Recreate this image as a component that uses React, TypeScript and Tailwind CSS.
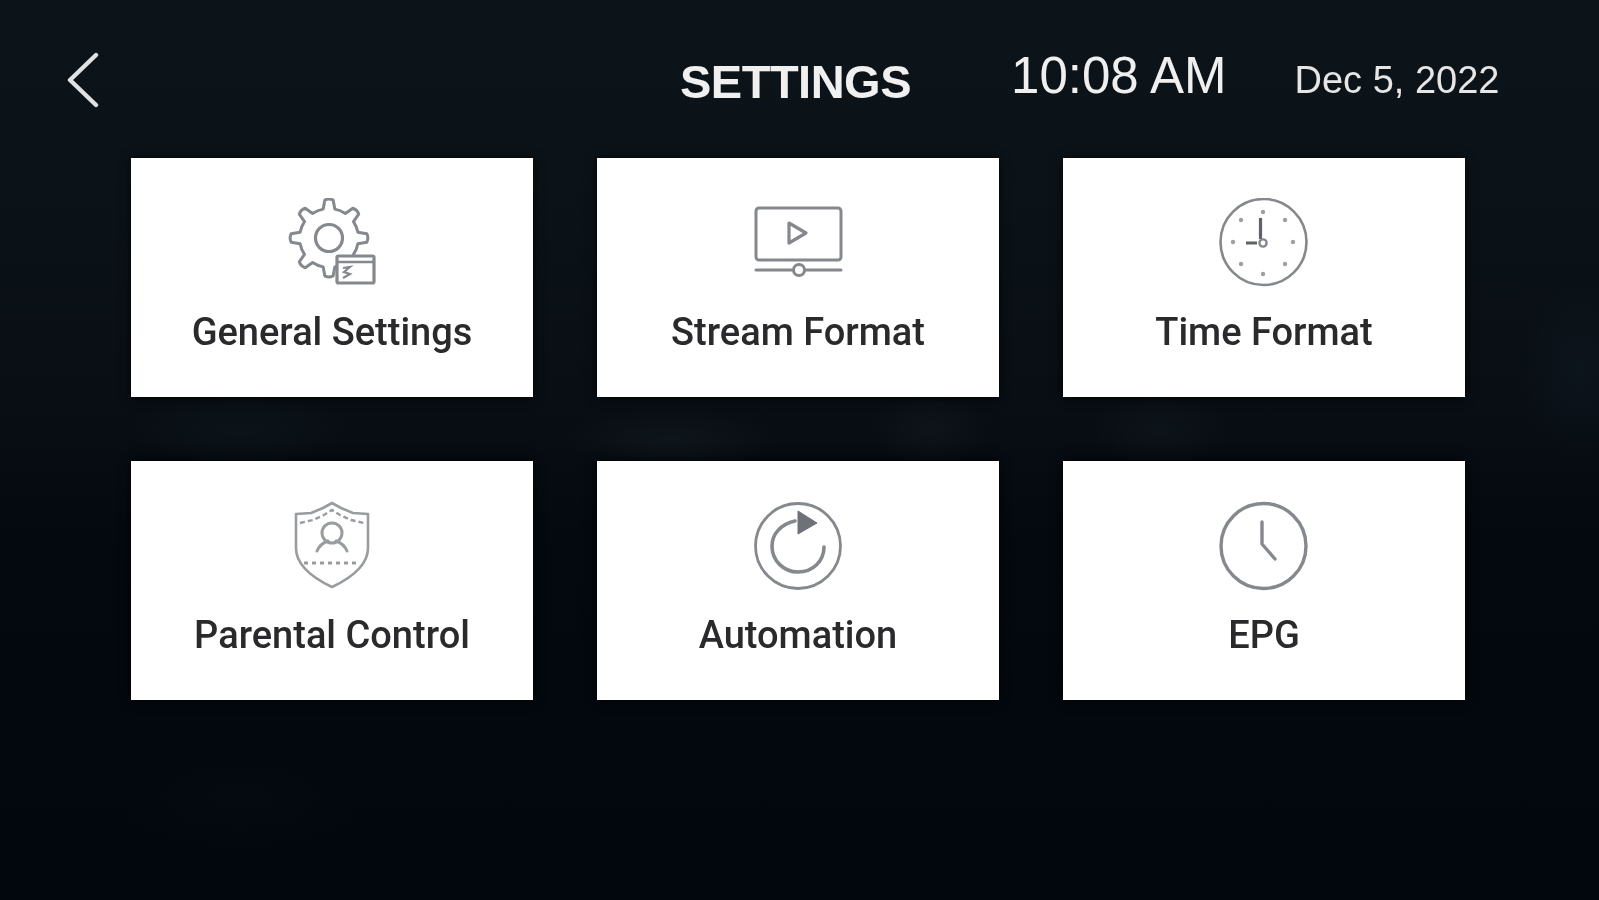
import React from "react";

const stroke = "#85888c";

function GearIcon() {
  const cx = 41, cy = 40;
  const pts: string[] = [];
  const n = 8, ro = 38, ri = 29.5;
  for (let i = 0; i < n; i++) {
    const a = (i / n) * Math.PI * 2 - Math.PI / 2;
    const d = Math.PI / n;
    const p = (r: number, t: number) => `${(cx + r * Math.cos(t)).toFixed(1)} ${(cy + r * Math.sin(t)).toFixed(1)}`;
    pts.push(`${i === 0 ? "M" : "L"}${p(ri, a - d * 0.5)}`, `L${p(ro, a - d * 0.28)}`, `Q${p(ro + 2, a)} ${p(ro, a + d * 0.28)}`, `L${p(ri, a + d * 0.5)}`, `A${ri} ${ri} 0 0 1 ${p(ri, a + d * 1.5)}`);
  }
  return (
    <svg width="92" height="92" viewBox="-2 0 92 92" fill="none" stroke={stroke} strokeWidth="3">
      <path d={pts.join(" ") + "Z"} strokeLinejoin="round" />
      <circle cx="41" cy="40" r="13.5" strokeWidth="3.2" />
      <rect x="49" y="58" width="37" height="27" rx="1.5" fill="#fff" strokeWidth="3.2" />
      <path d="M49 64H86" strokeWidth="2.6" />
      <path d="M55 70l7-1-6 5 6 2-7 4" strokeWidth="2.2" />
    </svg>
  );
}

function StreamIcon() {
  return (
    <svg width="92" height="92" viewBox="-2 0 92 92" fill="none" stroke={stroke} strokeWidth="3">
      <rect x="2" y="10" width="85" height="52" rx="3" />
      <path d="M35 25L52 35 35 45Z" strokeLinejoin="round" strokeWidth="3.2" />
      <path d="M2 72H39M51 72H87" strokeLinecap="round" />
      <circle cx="45" cy="72" r="5.5" />
    </svg>
  );
}

function DotClock() {
  const dots = [
    [44, 14], [66, 22], [74, 44], [66, 66], [44, 76], [22, 66], [14, 44], [22, 22],
  ];
  return (
    <svg width="92" height="92" viewBox="-1 0 92 92" fill="none" stroke={stroke} strokeWidth="2.6">
      <circle cx="44.5" cy="44" r="43" />
      {dots.map(([x, y]) => (
        <circle key={`${x}-${y}`} cx={x} cy={y} r="2.2" fill={stroke} stroke="none" opacity="0.8" />
      ))}
      <path d="M41.5 20V41M38 45H27" strokeWidth="3.2" stroke="#5f6266" />
      <circle cx="44" cy="45" r="3.6" strokeWidth="2.4" />
    </svg>
  );
}

function ShieldIcon() {
  return (
    <svg width="92" height="92" viewBox="-1 0 92 92" fill="none" stroke="#9a9da0" strokeWidth="2.6">
      <path d="M9 13L24 12 36 7 45 2 54 7 66 12 81 13V47C81 66 62 78 45 86 28 78 9 66 9 47Z" strokeLinejoin="round" />
      <path d="M13 22L26 19 37 14 45 9 53 14 64 19 77 22" strokeDasharray="5 3" strokeWidth="2.4" />
      <circle cx="45" cy="32" r="10" strokeWidth="3" />
      <path d="M30 50C33 43 38 41 41 40M60 50C57 43 52 41 49 40" strokeWidth="3" strokeLinecap="round" />
      <path d="M17 62H73" strokeDasharray="4 4" strokeWidth="3" />
    </svg>
  );
}

function ReloadIcon() {
  return (
    <svg width="92" height="92" viewBox="-2 -1 92 92" fill="none" stroke={stroke} strokeWidth="2.8">
      <circle cx="44" cy="44" r="42.5" />
      <path d="M70 45C70 59 59 70 44 70 30 70 18 59 18 44 18 32 27 22 41 19" strokeWidth="3.6" strokeLinecap="round" />
      <path d="M44 9L63 21 44 32Z" fill="#6e7177" stroke="#6e7177" strokeWidth="1" />
    </svg>
  );
}

function PlainClock() {
  return (
    <svg width="92" height="92" viewBox="-1 -1 92 92" fill="none" stroke={stroke} strokeWidth="3.4">
      <circle cx="44.5" cy="44" r="42.5" />
      <path d="M43 20V42L56 57" strokeLinecap="round" strokeLinejoin="round" />
    </svg>
  );
}

const items = [
  { label: "General Settings", Icon: GearIcon },
  { label: "Stream Format", Icon: StreamIcon },
  { label: "Time Format", Icon: DotClock },
  { label: "Parental Control", Icon: ShieldIcon },
  { label: "Automation", Icon: ReloadIcon },
  { label: "EPG", Icon: PlainClock },
];

export default function App() {
  return (
    <div className="h-[900px] w-[1599px] overflow-hidden bg-[radial-gradient(ellipse_60px_90px_at_1580px_370px,rgba(22,34,44,0.3),transparent),radial-gradient(ellipse_110px_30px_at_670px_440px,rgba(24,32,36,0.45),transparent),radial-gradient(ellipse_60px_36px_at_930px_430px,rgba(24,30,32,0.4),transparent),radial-gradient(ellipse_70px_36px_at_1160px_430px,rgba(20,28,34,0.4),transparent),radial-gradient(ellipse_110px_36px_at_240px_430px,rgba(18,28,34,0.4),transparent),radial-gradient(ellipse_120px_50px_at_240px_800px,rgba(14,18,24,0.25),transparent),linear-gradient(180deg,#0d1419_0%,#0c1318_20%,#080e14_45%,#04090f_60%,#02070d_100%)] font-['Liberation_Sans',sans-serif] text-white">
      <header className="flex h-[158px] items-start pl-[67px] pt-[52px]">
        <svg width="32" height="56" viewBox="0 0 32 56" fill="none" stroke="#dfe1e2" strokeWidth="4.4" strokeLinecap="round" strokeLinejoin="round" className="blur-[0.7px]">
          <path d="M29 3L3 28 29 53" />
        </svg>
        <h1 className="ml-[581px] mt-[3px] text-[47px] leading-[54px] font-bold tracking-[-0.5px] text-[#f0f0f0] blur-[0.6px]">SETTINGS</h1>
        <span className="ml-[100px] mt-[1px] text-[51px] leading-[46px] text-[#efefef] blur-[0.6px]">10:08 AM</span>
        <span className="ml-[68px] mt-[5px] text-[38px] leading-[46px] text-[#e6e6e6] blur-[0.6px]">Dec 5, 2022</span>
      </header>
      <main className="grid grid-cols-[402px_402px_402px] gap-x-[64px] gap-y-[64px] pl-[131px]">
        {items.map(({ label, Icon }) => (
          <div key={label} className="flex h-[239px] flex-col items-center bg-white pt-[40px] shadow-[0_0_10px_rgba(0,0,0,0.85)]">
            <div className="flex h-[92px] w-[92px] items-center justify-center blur-[0.6px]">
              <Icon />
            </div>
            <span className="mt-[20px] font-['Roboto',sans-serif] text-[38px] leading-[44px] font-medium text-[#2a2a2c] blur-[0.7px]">{label}</span>
          </div>
        ))}
      </main>
    </div>
  );
}
